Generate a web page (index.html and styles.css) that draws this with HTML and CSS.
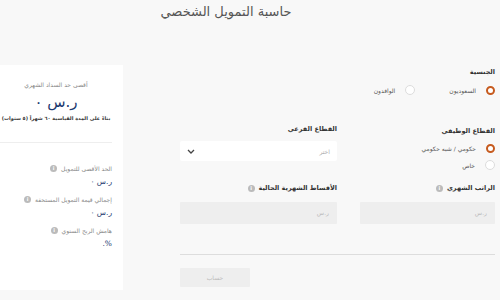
FILE: index.html
```html
<!DOCTYPE html>
<html lang="ar" dir="rtl">
<head>
    <meta charset="UTF-8">
    <meta name="viewport" content="width=device-width, initial-scale=1.0">
    <title>حاسبة التمويل الشخصي</title>
    <link rel="stylesheet" href="styles.css">
</head>
<body>
    <h1 class="page-title">حاسبة التمويل الشخصي</h1>

    <div class="layout">
        <form class="calc-form">
            <div class="field">
                <span class="field-label">الجنسية</span>
                <div class="radio-row">
                    <label class="radio"><span class="dot checked"></span>السعوديون</label>
                    <label class="radio"><span class="dot"></span>الوافدون</label>
                </div>
            </div>
            <div></div>

            <div class="field sector">
                <span class="field-label">القطاع الوظيفي</span>
                <div class="radio-col">
                    <label class="radio"><span class="dot checked"></span>حكومي / شبه حكومي</label>
                    <label class="radio"><span class="dot"></span>خاص</label>
                </div>
            </div>
            <div class="field sub-sector">
                <span class="field-label">القطاع الفرعي</span>
                <div class="select-box">
                    <span>اختر</span>
                    <svg width="8" height="5" viewBox="0 0 8 5"><path d="M1 1l3 3 3-3" fill="none" stroke="#444" stroke-width="1.3"/></svg>
                </div>
            </div>

            <div class="field amount">
                <span class="field-label">الراتب الشهري <i class="info">i</i></span>
                <div class="text-box">ر.س</div>
            </div>
            <div class="field amount">
                <span class="field-label">الأقساط الشهرية الحالية <i class="info">i</i></span>
                <div class="text-box">ر.س</div>
            </div>

            <hr class="divider">
            <div class="actions">
                <button type="button" class="calc-btn" disabled>حساب</button>
            </div>
        </form>

        <aside class="summary">
            <div class="summary-top">
                <p class="summary-caption">أقصى حد السداد الشهري</p>
                <p class="summary-total">ر.س ٠</p>
                <p class="summary-note">بناءً على المدة القياسية ٦٠ شهراً (٥ سنوات)</p>
            </div>
            <div class="summary-list">
                <div class="summary-item">
                    <span class="item-label">الحد الأقصى للتمويل <i class="info">i</i></span>
                    <span class="item-value">ر.س ٠</span>
                </div>
                <div class="summary-item">
                    <span class="item-label">إجمالي قيمة التمويل المستحقة <i class="info">i</i></span>
                    <span class="item-value">ر.س ٠</span>
                </div>
                <div class="summary-item">
                    <span class="item-label">هامش الربح السنوي <i class="info">i</i></span>
                    <span class="item-value">%.</span>
                </div>
            </div>
        </aside>
    </div>
</body>
</html>
```
FILE: styles.css
```css
/* base */
body {
  margin: 0;
  background-color: #f8f8f8;
  font-family: "DejaVu Sans", "Noto Sans", sans-serif;
  color: #333333;
}

.page-title {
  margin: 3px 0 0;
  padding-right: 48px;
  text-align: center;
  font-size: 13px;
  font-weight: normal;
  color: #555555;
  line-height: 18px;
}

.layout {
  display: flex;
  align-items: flex-start;
  gap: 57px;
  margin-top: 44px;
  padding-right: 5px;
}

/* form */
.calc-form {
  display: grid;
  grid-template-columns: 135px 157px;
  column-gap: 23px;
  padding-top: 2px;
}

.field-label {
  display: flex;
  align-items: center;
  gap: 4px;
  font-size: 6.5px;
  font-weight: bold;
  color: #333333;
  line-height: 10px;
}

.radio-row {
  display: flex;
  gap: 34px;
  margin-top: 8px;
}

.radio-col {
  display: flex;
  flex-direction: column;
  gap: 7px;
  margin-top: 8px;
}

.radio {
  display: flex;
  align-items: center;
  gap: 10px;
  font-size: 6px;
  color: #555555;
  white-space: nowrap;
}

.dot {
  width: 8px;
  height: 8px;
  border-radius: 50%;
  border: 1px solid #dddddd;
  background-color: #ffffff;
}

.dot.checked {
  width: 5px;
  height: 5px;
  border: 2.5px solid #c65a1e;
}

.sector {
  margin-top: 31px;
}

.sub-sector {
  margin-top: 29px;
}

.select-box {
  display: flex;
  align-items: center;
  justify-content: space-between;
  height: 20px;
  margin-top: 7px;
  padding: 0 7px;
  background-color: #ffffff;
  border-radius: 2px;
  font-size: 6px;
  color: #aaaaaa;
}

.amount {
  margin-top: 13px;
}

.text-box {
  height: 22px;
  margin-top: 9px;
  padding: 0 8px;
  background-color: #eeeeee;
  border-radius: 1px;
  font-size: 6px;
  line-height: 22px;
  color: #bbbbbb;
}

.info {
  display: inline-block;
  width: 7px;
  height: 7px;
  border-radius: 50%;
  background-color: #bbbbbb;
  color: #ffffff;
  font-size: 5px;
  font-style: normal;
  font-weight: bold;
  line-height: 7px;
  text-align: center;
}

.divider {
  grid-column: 1 / -1;
  width: 100%;
  margin: 30px 0 0;
  border: none;
  border-top: 1px solid #dddddd;
}

.actions {
  grid-column: 1 / -1;
  display: flex;
  justify-content: flex-end;
  margin-top: 13px;
}

.calc-btn {
  width: 70px;
  height: 19px;
  border: none;
  border-radius: 1px;
  background-color: #eeeeee;
  color: #bbbbbb;
  font-family: inherit;
  font-size: 6px;
}

/* summary card */
.summary {
  width: 123px;
  height: 225px;
  background-color: #ffffff;
  overflow: hidden;
}

.summary-top {
  margin: 0 11px 0 0;
  padding: 16px 0 0;
  border-bottom: 1px solid #eeeeee;
  height: 61px;
  text-align: center;
}

.summary-top p {
  margin: 0;
}

.summary-caption {
  font-size: 6px;
  color: #888888;
}

.summary-total {
  margin-top: 4px !important;
  font-size: 15px;
  color: #1e3a70;
  line-height: 20px;
}

.summary-note {
  margin-top: 3px !important;
  font-size: 5px;
  font-weight: bold;
  color: #333333;
  white-space: nowrap;
}

.summary-list {
  display: flex;
  flex-direction: column;
  gap: 10px;
  padding: 22px 11px 0 0;
}

.summary-item {
  display: flex;
  flex-direction: column;
  align-items: flex-start;
  gap: 5px;
}

.item-label {
  display: flex;
  align-items: center;
  gap: 4px;
  font-size: 6px;
  color: #888888;
}

.item-value {
  font-size: 7.5px;
  color: #1e3a70;
}
```
